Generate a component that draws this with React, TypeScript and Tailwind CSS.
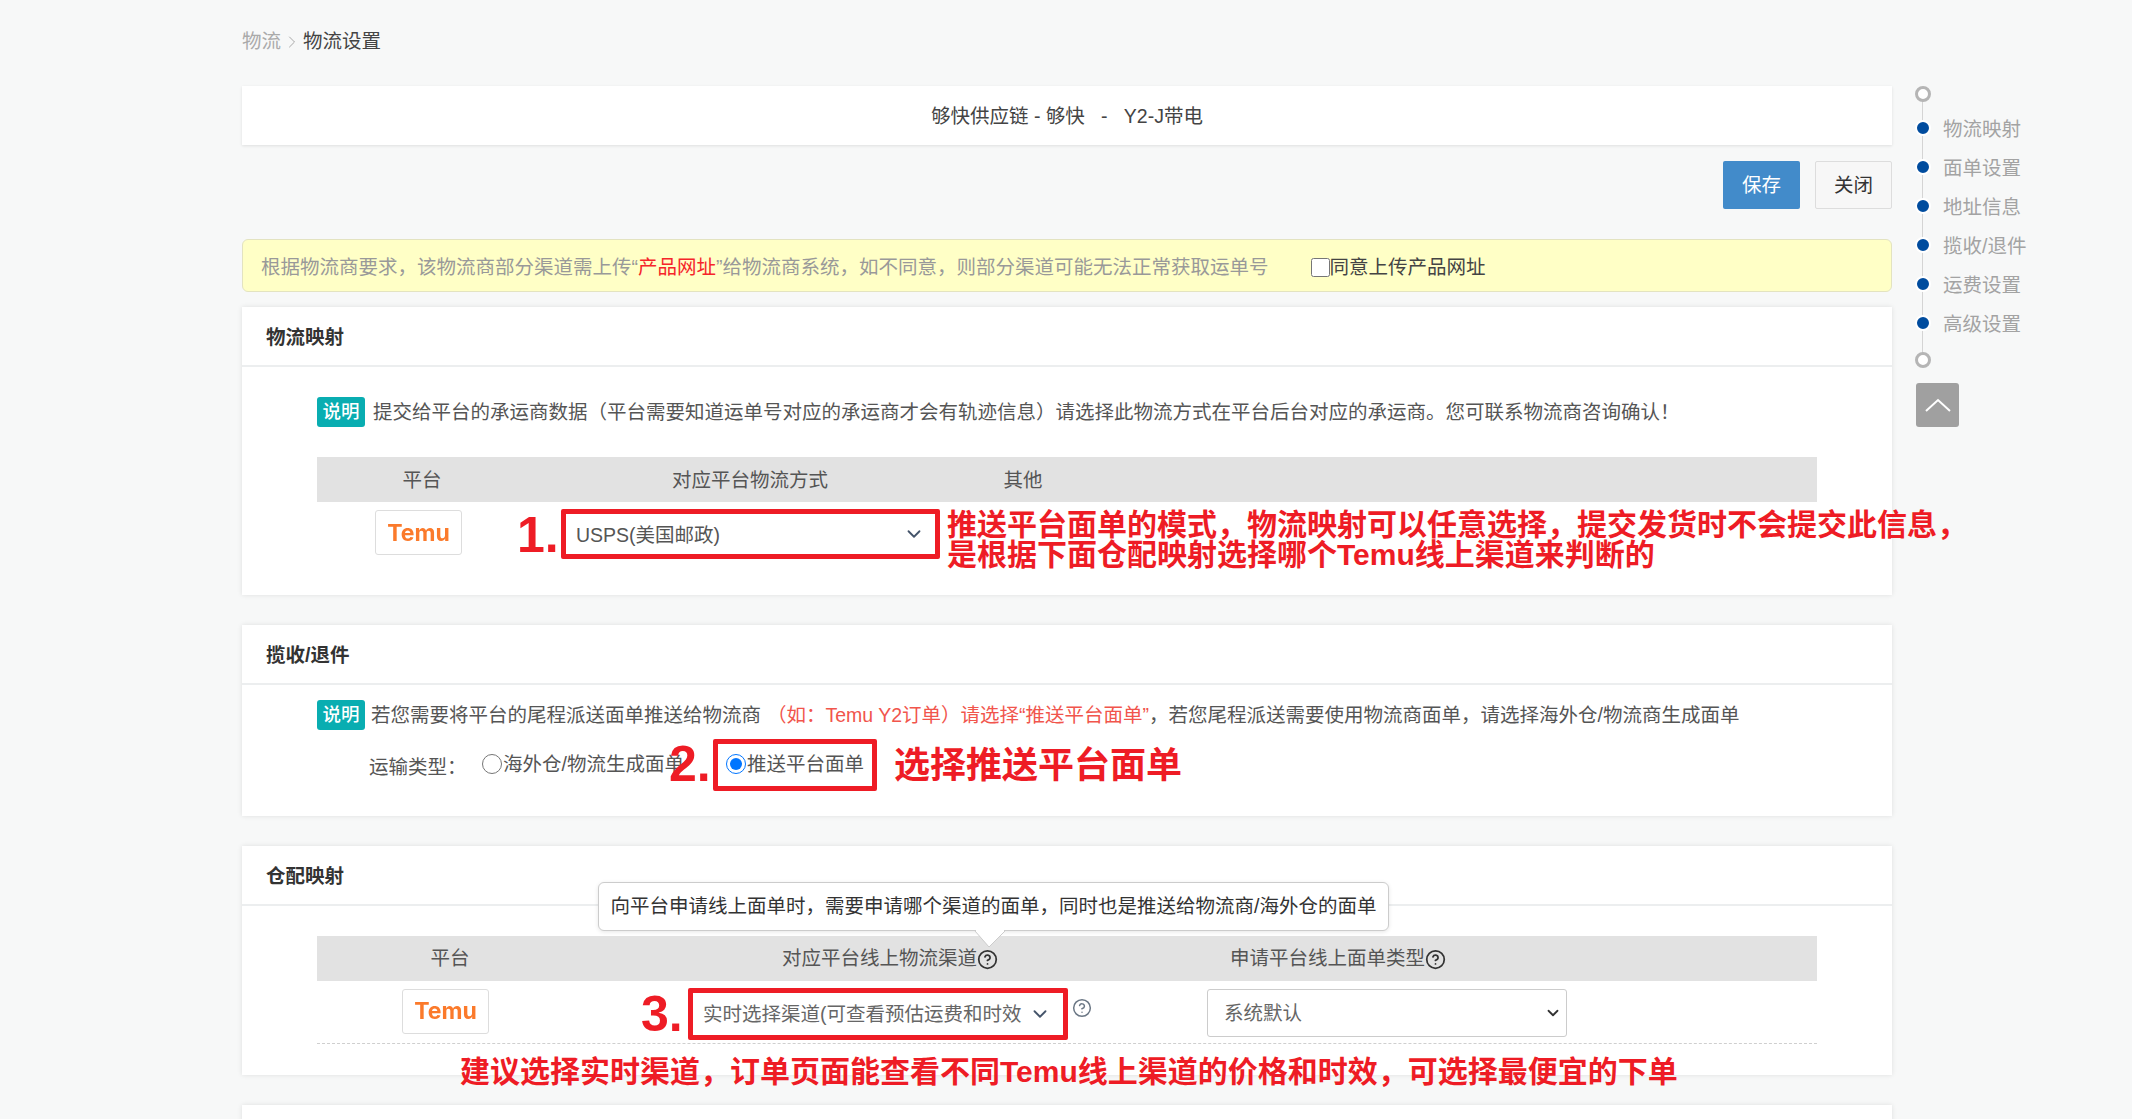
import React from "react";
import { ChevronDown, ChevronRight, CircleHelp } from "lucide-react";

const RAIL_ITEMS = ["物流映射", "面单设置", "地址信息", "揽收/退件", "运费设置", "高级设置"];

const Card: React.FC<{ title: string; className: string; children: React.ReactNode }> = ({ title, className, children }) => {
    return (
        <section className={`relative bg-white shadow-[0_0_5px_rgba(0,0,0,0.1)] ${className}`}>
            <h2 className="h-[60px] pl-[24px] pt-[3px] border-b-[2px] border-[#eceeef] flex items-center font-bold text-[#333]">{title}</h2>
            {children}
        </section>
    );
};

const Badge = () => (
    <span className="w-[48px] h-[30px] shrink-0 rounded-[3px] bg-[#09adb1] text-white flex items-center justify-center text-[18.5px] font-medium">说明</span>
);

const TemuLogo: React.FC<{ className?: string }> = ({ className }) => (
    <div className={`w-[87px] h-[45px] shrink-0 bg-white border border-[#dddddd] rounded-[3px] flex items-center justify-center font-['Inter',sans-serif] font-bold text-[23px] text-[#fb7a2b] ${className ?? ""}`}>
        <span className="blur-[0.5px]">Temu</span>
    </div>
);

const Marker: React.FC<{ className: string; children: React.ReactNode }> = ({ className, children }) => (
    <span className={`absolute font-bold text-[#ee1c25] whitespace-nowrap ${className}`}>{children}</span>
);

const HeaderCell: React.FC<{ className: string; children: React.ReactNode }> = ({ className, children }) => (
    <div className={`flex items-center justify-center pt-[1px] ${className}`}>{children}</div>
);

const App: React.FC = () => {
    return (
        <div className="h-[1119px] overflow-hidden bg-[#f7f8f8] pl-[242px] flex font-['Liberation_Sans','Noto_Sans_CJK_SC',sans-serif] text-[19.5px] text-[#555]">
            <main className="w-[1650px] shrink-0">
                <div className="h-[86px] pt-[27px] leading-[28px] flex items-start">
                    <span className="text-[#aaa]">物流</span>
                    <ChevronRight size={20} strokeWidth={1} className="text-[#999] mt-[5px] mx-[1px]" />
                    <span className="text-[#444]">物流设置</span>
                </div>

                <div className="h-[59px] pt-[2px] bg-white shadow-[0_1px_3px_rgba(0,0,0,0.1)] flex items-center justify-center text-[#444] whitespace-pre">
                    够快供应链 - 够快{"   -   "}Y2-J带电
                </div>

                <div className="mt-[16px] flex justify-end gap-[15px]">
                    <button className="w-[77px] h-[48px] pt-[1px] bg-[#428bca] text-white rounded-[2px]">保存</button>
                    <button className="w-[77px] h-[48px] pt-[1px] bg-[#f7f7f7] border border-[#ddd] text-[#333] rounded-[2px]">关闭</button>
                </div>

                <div className="mt-[30px] h-[53px] pl-[18px] pt-[4px] bg-[#ffffc6] border border-[#e3e3c0] rounded-[6px] flex items-center text-[#999]">
                    <span>根据物流商要求，该物流商部分渠道需上传“<span className="text-[#f5252a]">产品网址</span>”给物流商系统，如不同意，则部分渠道可能无法正常获取运单号</span>
                    <label className="ml-[42px] flex items-center text-[#444]">
                        <input type="checkbox" className="w-[19px] h-[19px] m-0" />
                        同意上传产品网址
                    </label>
                </div>

                <Card title="物流映射" className="mt-[15px] h-[288px]">
                    <div className="ml-[75px] mt-[29px] flex items-center gap-[8px] text-[#555]">
                        <Badge />
                        <span className="pt-[2px]">提交给平台的承运商数据（平台需要知道运单号对应的承运商才会有轨迹信息）请选择此物流方式在平台后台对应的承运商。您可联系物流商咨询确认！</span>
                    </div>
                    <div className="ml-[75px] mr-[75px] mt-[30px] h-[45px] bg-[#e2e2e2] flex">
                        <HeaderCell className="w-[210px]">平台</HeaderCell>
                        <HeaderCell className="w-[446px]">对应平台物流方式</HeaderCell>
                        <HeaderCell className="w-[100px]">其他</HeaderCell>
                    </div>
                    <div className="relative ml-[133px] mt-[7px] flex items-start">
                        <TemuLogo className="mt-[1px]" />
                        <div className="ml-[99px] w-[379px] h-[50px] border-[5px] border-[#ee1c25] rounded-[2px] pl-[10px] pr-[10px] flex items-center justify-between">
                            <span className="pt-[2px]">USPS(美国邮政)</span>
                            <ChevronDown size={22} strokeWidth={2} className="text-[#44546a]" />
                        </div>
                        <Marker className="left-[142px] top-[-10px] text-[50px] leading-[72px]">1.</Marker>
                        <Marker className="left-[572px] top-[1px] text-[30px] leading-[30px]">
                            推送平台面单的模式，物流映射可以任意选择，提交发货时不会提交此信息，<br />是根据下面仓配映射选择哪个Temu线上渠道来判断的
                        </Marker>
                    </div>
                </Card>

                <Card title="揽收/退件" className="mt-[30px] h-[191px]">
                    <div className="ml-[75px] mt-[15px] flex items-center gap-[6px]">
                        <Badge />
                        <span className="pt-[1px]">
                            若您需要将平台的尾程派送面单推送给物流商
                            <span className="ml-[6px] text-[#f1554c]">（如：Temu Y2订单）请选择“推送平台面单”</span>
                            ，若您尾程派送需要使用物流商面单，请选择海外仓/物流商生成面单
                        </span>
                    </div>
                    <div className="relative ml-[127px] mt-[9px] h-[52px] flex items-center">
                        <span className="w-[113px] pt-[4px]">运输类型：</span>
                        <label className="w-[231px] flex items-center pb-[2px]">
                            <input type="radio" name="ship" className="w-[20px] h-[20px] m-0 mr-[1px]" />
                            海外仓/物流生成面单
                        </label>
                        <label className="w-[164px] h-[52px] border-[5px] border-[#ee1c25] rounded-[2px] pl-[8px] pb-[2px] flex items-center">
                            <input type="radio" name="ship" defaultChecked className="w-[20px] h-[20px] m-0 mr-[1px]" />
                            推送平台面单
                        </label>
                        <Marker className="left-[300px] top-[-11px] text-[50px] leading-[72px]">2.</Marker>
                        <Marker className="left-[525px] top-[2px] text-[36px] leading-[50px]">选择推送平台面单</Marker>
                    </div>
                </Card>

                <Card title="仓配映射" className="mt-[30px] h-[229px]">
                    <div className="ml-[75px] mr-[75px] mt-[30px] h-[45px] bg-[#e2e2e2] flex">
                        <HeaderCell className="w-[266px]">平台</HeaderCell>
                        <HeaderCell className="w-[614px]">
                            对应平台线上物流渠道
                            <CircleHelp size={21} strokeWidth={2} className="text-[#333]" />
                        </HeaderCell>
                        <HeaderCell className="w-[282px]">
                            申请平台线上面单类型
                            <CircleHelp size={21} strokeWidth={2} className="text-[#333]" />
                        </HeaderCell>
                    </div>
                    <div className="relative ml-[75px] mr-[75px] h-[63px] border-b border-dashed border-[#cfcfcf] flex items-start pt-[7px]">
                        <TemuLogo className="ml-[85px] mt-[1px]" />
                        <div className="ml-[199px] w-[380px] h-[52px] border-[5px] border-[#ee1c25] rounded-[2px] pl-[10px] pr-[12px] flex items-center justify-between text-[#666]">
                            <span className="pt-[1px] whitespace-nowrap">实时选择渠道(可查看预估运费和时效</span>
                            <ChevronDown size={22} strokeWidth={2} className="shrink-0 text-[#44546a]" />
                        </div>
                        <CircleHelp size={20} strokeWidth={1.8} className="ml-[4px] mt-[10px] text-[#6b7785]" />
                        <div className="ml-[115px] mt-[1px] w-[360px] h-[48px] border border-[#cccccc] rounded-[3px] pl-[16px] pr-[4px] flex items-center justify-between text-[#666]">
                            <span className="pt-[1px]">系统默认</span>
                            <ChevronDown size={18} strokeWidth={2.4} className="text-[#333]" />
                        </div>
                        <Marker className="left-[324px] top-[-3px] text-[50px] leading-[72px]">3.</Marker>
                    </div>
                    <Marker className="left-[218px] top-[204px] text-[30px] leading-[44px]">建议选择实时渠道，订单页面能查看不同Temu线上渠道的价格和时效，可选择最便宜的下单</Marker>

                    <div className="absolute left-[356px] top-[36px] w-[791px] h-[49px] pt-[1px] bg-white border border-[#cccccc] rounded-[6px] shadow-[0_1px_4px_rgba(0,0,0,0.1)] flex items-center justify-center text-[#333]">
                        向平台申请线上面单时，需要申请哪个渠道的面单，同时也是推送给物流商/海外仓的面单
                    </div>
                    <svg className="absolute left-[732px] top-[84px]" width="32" height="18" viewBox="0 0 32 18">
                        <path d="M1 1 L15 17 L31 1" fill="white" stroke="#cccccc" />
                        <path d="M2 0 H30 V1 H2 Z" fill="white" />
                    </svg>
                </Card>

                <section className="mt-[30px] h-[60px] bg-white shadow-[0_0_5px_rgba(0,0,0,0.1)]"></section>
            </main>

            <aside className="relative ml-[23px] mt-[86px] w-[120px] text-[#a3a3a3]">
                <div className="absolute left-[7px] top-[8px] h-[266px] w-px bg-[#d4d4d4]"></div>
                <div className="relative w-[16px] h-[16px] rounded-full border-[3px] border-[#b5b5b5] bg-white"></div>
                <ul className="relative mt-[6px]">
                    {RAIL_ITEMS.map((item) => (
                        <li key={item} className="h-[39px] flex items-center whitespace-nowrap">
                            <span className="w-[16px] h-[16px] rounded-full border-[2px] border-white bg-[#004c9e]"></span>
                            <span className="ml-[12px] pt-[5px]">{item}</span>
                        </li>
                    ))}
                </ul>
                <div className="relative mt-[10px] w-[16px] h-[16px] rounded-full border-[3px] border-[#b5b5b5] bg-white"></div>
                <button className="mt-[15px] ml-[1px] w-[43px] h-[44px] bg-[#a0a0a0] rounded-[3px] flex items-center justify-center">
                    <svg width="26" height="14" viewBox="0 0 26 14" fill="none" stroke="white" strokeWidth="2">
                        <path d="M1 13 L13 2 L25 13" />
                    </svg>
                </button>
            </aside>
        </div>
    );
};

export default App;
